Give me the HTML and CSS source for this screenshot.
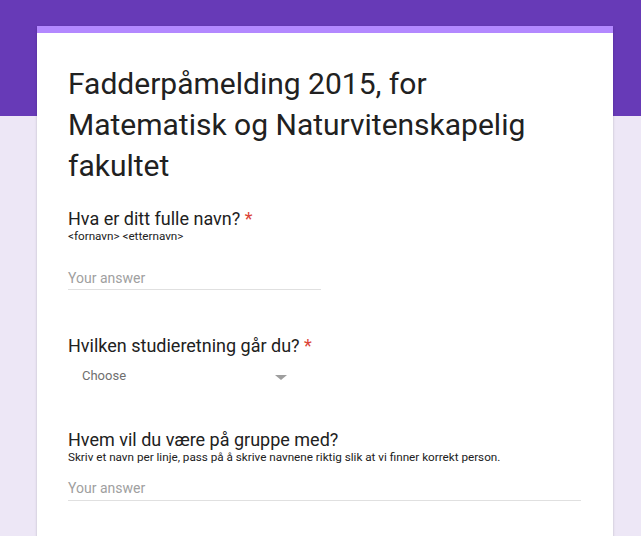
FILE: index.html
```html
<!DOCTYPE html>
<html lang="no">
<head>
<meta charset="utf-8">
<title>Fadderpåmelding 2015</title>
<link rel="stylesheet" href="styles.css">
</head>
<body>
<div class="page">
  <div class="card">
    <h1 class="title">Fadderpåmelding 2015, for Matematisk og Naturvitenskapelig fakultet</h1>

    <div class="question q1">
      <div class="q-title">Hva er ditt fulle navn? <span class="star">*</span></div>
      <div class="q-desc">&lt;fornavn&gt; &lt;etternavn&gt;</div>
      <div class="answer short"><span class="placeholder">Your answer</span></div>
    </div>

    <div class="question q2">
      <div class="q-title">Hvilken studieretning går du? <span class="star">*</span></div>
      <div class="select">
        <span class="select-text">Choose</span>
        <span class="arrow"></span>
      </div>
    </div>

    <div class="question q3">
      <div class="q-title">Hvem vil du være på gruppe med?</div>
      <div class="q-desc">Skriv et navn per linje, pass på å skrive navnene riktig slik at vi finner korrekt person.</div>
      <div class="answer long"><span class="placeholder">Your answer</span></div>
    </div>
  </div>
</div>
</body>
</html>
```

FILE: styles.css
```css
html, body {
  margin: 0;
  padding: 0;
}
body {
  font-family: Roboto, "Liberation Sans", Arial, sans-serif;
  color: #202124;
  background: linear-gradient(to bottom, #673ab7 0, #673ab7 116px, #ede7f6 116px, #ede7f6 100%);
  min-height: 536px;
}
.page {
  padding-top: 26px;
  padding-left: 37px;
}
.card {
  width: 576px;
  box-sizing: border-box;
  background: #fff;
  border-top: 7px solid #b388ff;
  padding: 30px 32px 40px 31px;
  min-height: 520px;
  box-shadow: 0 2px 1px -1px rgba(0,0,0,.2), 0 1px 1px 0 rgba(0,0,0,.14), 0 1px 3px 0 rgba(0,0,0,.12);
}
.title {
  margin: 0;
  max-width: 480px;
  font-size: 30px;
  font-weight: 400;
  line-height: 41px;
  color: #212121;
}
.question {
  display: flex;
  flex-direction: column;
}
.q1 { margin-top: 23px; }
.q2 { margin-top: 46px; }
.q3 { margin-top: 44px; }
.q-title {
  font-size: 18px;
  line-height: 20px;
  color: #212121;
}
.star {
  color: #db4437;
}
.q-desc {
  font-size: 11.7px;
  line-height: 14px;
  color: #212121;
}
.answer {
  border-bottom: 1px solid #e0e0e0;
}
.answer.short {
  width: 253px;
  margin-top: 25px;
  padding-bottom: 1px;
}
.answer.long {
  margin-top: 14px;
  padding-bottom: 2px;
}
.placeholder {
  display: block;
  font-size: 14px;
  line-height: 20px;
  color: #a0a0a0;
}
.select {
  display: flex;
  align-items: center;
  justify-content: space-between;
  width: 205px;
  margin-left: 14px;
  margin-top: 10px;
  height: 20px;
}
.select-text {
  font-size: 13px;
  line-height: 20px;
  font-weight: 400;
  color: #6f6f6f;
}
.arrow {
  width: 0;
  height: 0;
  border-left: 6px solid transparent;
  border-right: 6px solid transparent;
  border-top: 5px solid #9e9e9e;
  margin-top: 2px;
}
```
